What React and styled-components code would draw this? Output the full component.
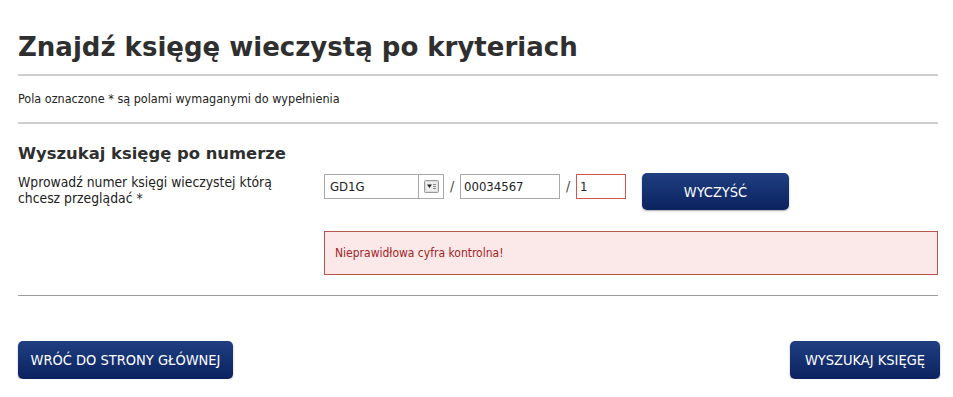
import styled, { createGlobalStyle } from "styled-components";

const Global = createGlobalStyle`
  body {
    margin: 0;
    background: #fff;
    font-family: "DejaVu Sans Condensed", "DejaVu Sans", Verdana, sans-serif;
    color: #222;
  }
`;

const Page = styled.div`
  width: 920px;
  padding: 0 15px 0 18px;
`;

const Title = styled.h1`
  margin: 0;
  padding-top: 32px;
  padding-bottom: 12px;
  font-family: "DejaVu Sans", Verdana, sans-serif;
  font-size: 26px;
  font-weight: bold;
  color: #2f2f2f;
  line-height: 30px;
  border-bottom: 2px solid #cfcfcf;
`;

const Note = styled.p`
  margin: 0;
  padding: 15px 0 15px;
  font-size: 12.5px;
  line-height: 16px;
  border-bottom: 2px solid #cfcfcf;
`;

const Section = styled.section`
  padding: 20px 0 20px;
  border-bottom: 1px solid #9c9c9c;
`;

const SectionTitle = styled.h2`
  margin: 0 0 10px;
  font-family: "DejaVu Sans", Verdana, sans-serif;
  font-size: 16.4px;
  font-weight: bold;
  line-height: 20px;
  color: #2f2f2f;
`;

const Row = styled.div`
  display: grid;
  grid-template-columns: 306px 1fr;
`;

const Label = styled.div`
  font-size: 13.8px;
  line-height: 16px;
  padding-top: 0;
  width: 285px;
`;

const Controls = styled.div`
  display: flex;
  flex-direction: column;
  gap: 21px;
`;

const Inputs = styled.div`
  display: flex;
  align-items: flex-start;
`;

const Select = styled.div`
  display: flex;
  width: 120px;
  height: 25px;
  box-sizing: border-box;
  border: 1px solid #a9a9a9;
`;

const SelectValue = styled.div`
  flex: 1;
  padding: 0 5px;
  font-size: 13px;
  line-height: 23px;
`;

const SelectButton = styled.div`
  width: 24px;
  border-left: 1px solid #a9a9a9;
  display: flex;
  align-items: center;
  justify-content: center;
`;

const Slash = styled.span`
  font-size: 14px;
  line-height: 25px;
  width: 16px;
  text-align: center;
  color: #444;
`;

const Field = styled.input`
  width: ${(p) => p.$w}px;
  height: 25px;
  box-sizing: border-box;
  border: 1px solid ${(p) => (p.$error ? "#d9534f" : "#a9a9a9")};
  padding: 0 3px;
  font-family: "DejaVu Sans Condensed", "DejaVu Sans", Verdana, sans-serif;
  font-size: 13px;
  color: #222;
  outline: none;
`;

const Button = styled.button`
  height: 38px;
  padding: 0 10px;
  min-width: ${(p) => p.$min || 0}px;
  border: none;
  border-radius: 5px;
  background: linear-gradient(#1f3f80, #0b2260);
  box-shadow: 0 1px 2px rgba(0, 0, 0, 0.35);
  color: #fff;
  font-family: "DejaVu Sans Condensed", "DejaVu Sans", Verdana, sans-serif;
  font-size: 14.5px;
  cursor: pointer;
`;

const ClearButton = styled(Button)`
  margin-left: 16px;
  margin-top: -1px;
  width: 147px;
  height: 37px;
`;

const ErrorBox = styled.div`
  height: 44px;
  box-sizing: border-box;
  border: 1px solid #b85450;
  background: #fbe9e9;
  color: #a3231f;
  font-size: 12px;
  line-height: 42px;
  padding-left: 10px;
`;

const Footer = styled.div`
  display: flex;
  justify-content: space-between;
  margin-right: -2px;
  padding-top: 45px;
`;

const SelectIcon = () => (
  <svg width="15" height="13" viewBox="0 0 15 13">
    <rect x="0.5" y="0.5" width="14" height="12" rx="1" fill="#ddd" stroke="#999" />
    <rect x="2" y="2" width="11" height="9" fill="#eee" />
    <path d="M3 4.5h5L5.5 8z" fill="#222" />
    <path d="M9 4.5h3M9 6.5h3M9 8.5h3" stroke="#888" strokeWidth="1" />
  </svg>
);

export default function App() {
  return (
    <Page>
      <Global />
      <Title>Znajdź księgę wieczystą po kryteriach</Title>
      <Note>Pola oznaczone * są polami wymaganymi do wypełnienia</Note>
      <Section>
        <SectionTitle>Wyszukaj księgę po numerze</SectionTitle>
        <Row>
          <Label>Wprowadź numer księgi wieczystej którą chcesz przeglądać *</Label>
          <Controls>
            <Inputs>
              <Select>
                <SelectValue>GD1G</SelectValue>
                <SelectButton>
                  <SelectIcon />
                </SelectButton>
              </Select>
              <Slash>/</Slash>
              <Field $w={100} defaultValue="00034567" />
              <Slash>/</Slash>
              <Field $w={50} $error defaultValue="1" />
              <ClearButton>WYCZYŚĆ</ClearButton>
            </Inputs>
            <ErrorBox>Nieprawidłowa cyfra kontrolna!</ErrorBox>
          </Controls>
        </Row>
      </Section>
      <Footer>
        <Button $min={215}>WRÓĆ DO STRONY GŁÓWNEJ</Button>
        <Button $min={150}>WYSZUKAJ KSIĘGĘ</Button>
      </Footer>
    </Page>
  );
}
